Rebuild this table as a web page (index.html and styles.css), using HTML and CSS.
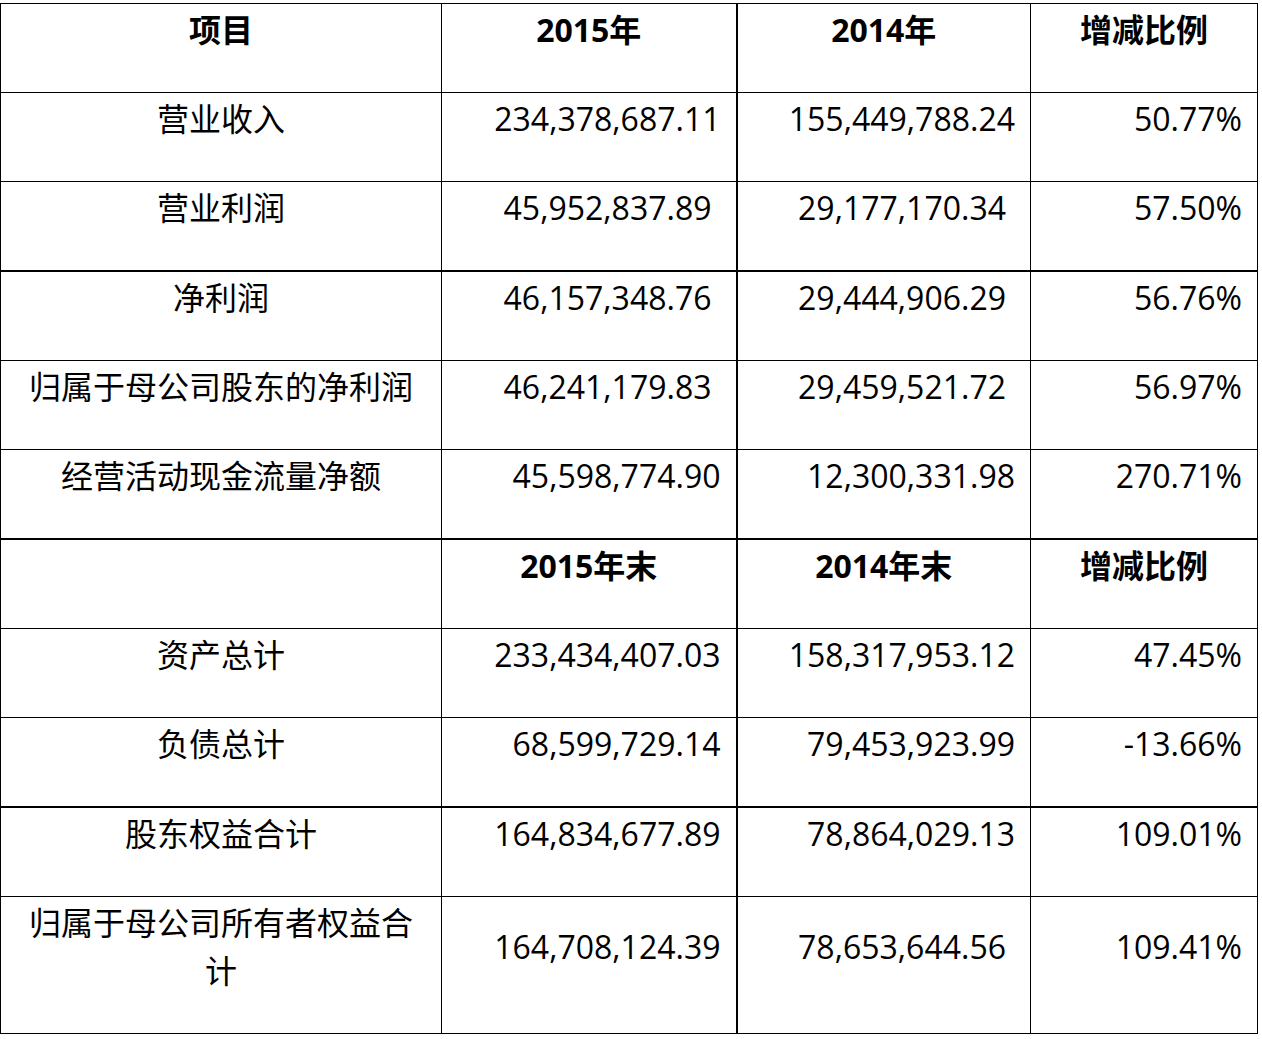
FILE: index.html
```html
<!DOCTYPE html>
<html lang="zh-CN">
<head>
<meta charset="utf-8">
<title>财务数据</title>
<link rel="stylesheet" href="styles.css">
</head>
<body>
<table class="fin">
  <colgroup>
    <col class="c1"><col class="c2"><col class="c3"><col class="c4">
  </colgroup>
  <tr class="head">
    <td class="ctr">项目</td><td class="ctr sep">2015年</td><td class="ctr">2014年</td><td class="ctr">增减比例</td>
  </tr>
  <tr>
    <td class="ctr">营业收入</td><td class="num sep">234,378,687.11</td><td class="num">155,449,788.24</td><td class="num">50.77%</td>
  </tr>
  <tr>
    <td class="ctr">营业利润</td><td class="num ind sep">45,952,837.89</td><td class="num ind">29,177,170.34</td><td class="num">57.50%</td>
  </tr>
  <tr class="thick">
    <td class="ctr">净利润</td><td class="num ind sep">46,157,348.76</td><td class="num ind">29,444,906.29</td><td class="num">56.76%</td>
  </tr>
  <tr>
    <td class="ctr">归属于母公司股东的净利润</td><td class="num ind sep">46,241,179.83</td><td class="num ind">29,459,521.72</td><td class="num">56.97%</td>
  </tr>
  <tr>
    <td class="ctr">经营活动现金流量净额</td><td class="num sep">45,598,774.90</td><td class="num">12,300,331.98</td><td class="num">270.71%</td>
  </tr>
  <tr class="head thick">
    <td class="ctr"></td><td class="ctr sep">2015年末</td><td class="ctr">2014年末</td><td class="ctr">增减比例</td>
  </tr>
  <tr>
    <td class="ctr">资产总计</td><td class="num sep">233,434,407.03</td><td class="num">158,317,953.12</td><td class="num">47.45%</td>
  </tr>
  <tr>
    <td class="ctr">负债总计</td><td class="num sep">68,599,729.14</td><td class="num">79,453,923.99</td><td class="num">-13.66%</td>
  </tr>
  <tr class="thick">
    <td class="ctr">股东权益合计</td><td class="num sep">164,834,677.89</td><td class="num">78,864,029.13</td><td class="num">109.01%</td>
  </tr>
  <tr>
    <td class="ctr">归属于母公司所有者权益合计</td><td class="num sep">164,708,124.39</td><td class="num ind">78,653,644.56</td><td class="num">109.41%</td>
  </tr>
</table>
</body>
</html>
```
FILE: styles.css
```css
html, body {
  margin: 0;
  padding: 0;
  background: #ffffff;
}
body {
  padding-top: 3px;
  font-family: "Open Sans", "Noto Sans CJK SC", sans-serif;
  color: #000000;
}
.fin {
  border-collapse: collapse;
  table-layout: fixed;
  width: 1257px;
}
.c1 { width: 441px; }
.c2 { width: 295px; }
.c3 { width: 294px; }
.c4 { width: 227px; }
.fin td {
  border: 1px solid #000000;
  font-size: 32px;
  line-height: 48px;
  padding: 2px 15px 38px 15px;
  vertical-align: middle;
  white-space: normal;
  word-break: break-all;
}
.fin .head td {
  font-weight: bold;
}
.fin .thick td {
  border-top-width: 2px;
}
.fin td.sep {
  border-right-width: 2px;
}
.ctr { text-align: center; }
.num { text-align: right; }
.fin td.ind { padding-right: 24px; }
.fin td.ctr { padding-left: 14px; padding-right: 14px; }
```
